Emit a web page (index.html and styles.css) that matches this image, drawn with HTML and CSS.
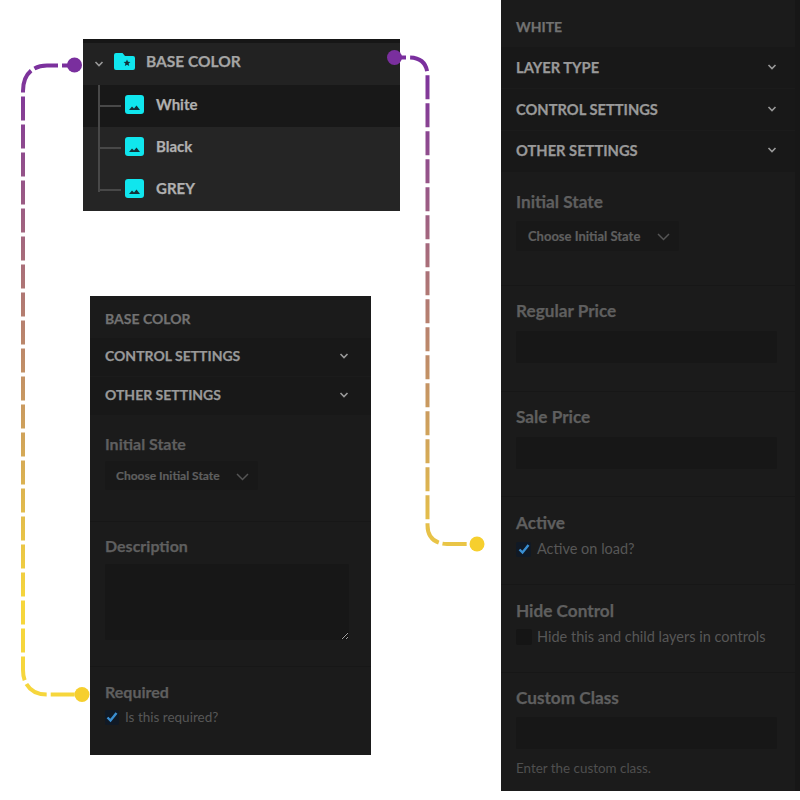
FILE: index.html
```html
<!DOCTYPE html>
<html lang="en">
<head>
<meta charset="utf-8">
<title>Layer settings</title>
<link rel="stylesheet" href="styles.css">
</head>
<body>
<div class="canvas">
  <section class="tree">
    <div class="tree-head">
      <svg class="caret-small" viewBox="0 0 10 6"><path d="M1.500 1l3.500 3.500L8.500 1"/></svg>
      <svg class="folder" viewBox="0 0 21 17"><path d="M2 0h6.500l2.500 3h8a2 2 0 0 1 2 2v10a2 2 0 0 1-2 2H2a2 2 0 0 1-2-2V2a2 2 0 0 1 2-2z" fill="#10e6ee"/><path d="M13 6.500l1 2.300 2.400.2-1.800 1.600.6 2.400-2.200-1.300-2.200 1.300.6-2.400-1.800-1.600 2.400-.2z" fill="#123038"/></svg>
      <span>BASE COLOR</span>
    </div>
    <div class="tree-body">
      <div class="tree-line"></div>
      <div class="tree-row selected">
        <i class="branch"></i>
        <svg class="pic" viewBox="0 0 19 19"><rect width="19" height="19" rx="3" fill="#10e6ee"/><path d="M4 15l3-3.500 2 2 2.500-3 3.500 4.500z" fill="#123038"/></svg>
        <span>White</span>
      </div>
      <div class="tree-row">
        <i class="branch"></i>
        <svg class="pic" viewBox="0 0 19 19"><rect width="19" height="19" rx="3" fill="#10e6ee"/><path d="M4 15l3-3.500 2 2 2.500-3 3.500 4.500z" fill="#123038"/></svg>
        <span>Black</span>
      </div>
      <div class="tree-row">
        <i class="branch"></i>
        <svg class="pic" viewBox="0 0 19 19"><rect width="19" height="19" rx="3" fill="#10e6ee"/><path d="M4 15l3-3.500 2 2 2.500-3 3.500 4.500z" fill="#123038"/></svg>
        <span>GREY</span>
      </div>
    </div>
  </section>

  <section class="panel panel-base">
    <div class="title">BASE COLOR</div>
    <div class="acc"><span>CONTROL SETTINGS</span><svg class="caret-small" viewBox="0 0 10 6"><path d="M1.500 1l3.500 3.500L8.500 1"/></svg></div>
    <div class="acc"><span>OTHER SETTINGS</span><svg class="caret-small" viewBox="0 0 10 6"><path d="M1.500 1l3.500 3.500L8.500 1"/></svg></div>
    <div class="group g-initial">
      <div class="label">Initial State</div>
      <div class="select"><span>Choose Initial State</span><svg viewBox="0 0 13 8"><path d="M1 1l5.500 5.500L12 1"/></svg></div>
    </div>
    <div class="group g-desc">
      <div class="label">Description</div>
      <textarea class="area"></textarea>
    </div>
    <div class="group g-req">
      <div class="label">Required</div>
      <div class="check"><span class="box"><svg viewBox="0 0 12 12"><path d="M1.500 6.500l3 3 6-7.500"/></svg></span><span>Is this required?</span></div>
    </div>
  </section>

  <section class="panel panel-white">
    <div class="title">WHITE</div>
    <div class="acc"><span>LAYER TYPE</span><svg class="caret-small" viewBox="0 0 10 6"><path d="M1.500 1l3.500 3.500L8.500 1"/></svg></div>
    <div class="acc"><span>CONTROL SETTINGS</span><svg class="caret-small" viewBox="0 0 10 6"><path d="M1.500 1l3.500 3.500L8.500 1"/></svg></div>
    <div class="acc acc-last"><span>OTHER SETTINGS</span><svg class="caret-small" viewBox="0 0 10 6"><path d="M1.500 1l3.500 3.500L8.500 1"/></svg></div>
    <div class="group w-initial">
      <div class="label">Initial State</div>
      <div class="select"><span>Choose Initial State</span><svg viewBox="0 0 13 8"><path d="M1 1l5.500 5.500L12 1"/></svg></div>
    </div>
    <div class="group w-field">
      <div class="label">Regular Price</div>
      <div class="input"></div>
    </div>
    <div class="group w-field w-sale">
      <div class="label">Sale Price</div>
      <div class="input"></div>
    </div>
    <div class="group w-check">
      <div class="label">Active</div>
      <div class="check"><span class="box"><svg viewBox="0 0 12 12"><path d="M1.500 6.500l3 3 6-7.500"/></svg></span><span>Active on load?</span></div>
    </div>
    <div class="group w-check">
      <div class="label">Hide Control</div>
      <div class="check"><span class="box empty"></span><span>Hide this and child layers in controls</span></div>
    </div>
    <div class="group w-last">
      <div class="label">Custom Class</div>
      <div class="input"></div>
      <div class="help">Enter the custom class.</div>
    </div>
  </section>

  <svg class="wires" width="800" height="800" viewBox="0 0 800 800">
    <defs>
      <linearGradient id="fade" gradientUnits="userSpaceOnUse" x1="0" y1="60" x2="0" y2="600">
        <stop offset="0" stop-color="#7a2f9e"/>
        <stop offset="1" stop-color="#f6d63c"/>
      </linearGradient>
    </defs>
    <path class="wire" d="M74 65.500H47C32 65.500 23 75 23 91V670C23 685 32 694.500 47 694.500H82"/>
    <path class="wire" d="M394 57.500H409C421 57.500 427.500 64 427.500 76V525C427.500 537 435 544 447 544H477"/>
    <circle cx="74.500" cy="65" r="7.500" fill="#7a2f9e"/>
    <circle cx="394.500" cy="57.500" r="7.500" fill="#7a2f9e"/>
    <circle cx="82" cy="694.500" r="7.500" fill="#f6cf2e"/>
    <circle cx="477" cy="544" r="7.500" fill="#f6cf2e"/>
  </svg>
</div>
</body>
</html>
```
FILE: styles.css
```css
* { box-sizing: border-box; }
html, body { margin: 0; background: #fff; }
body { font-family: Lato, "Noto Sans", sans-serif; }
.canvas { position: relative; width: 800px; height: 800px; overflow: hidden; }

.wires { position: absolute; left: 0; top: 0; pointer-events: none; }
.wire { fill: none; stroke: url(#fade); stroke-width: 4; stroke-dasharray: 24 4; stroke-dashoffset: 12; }

/* tree */
.tree { position: absolute; left: 83px; top: 39px; width: 317px; height: 172px; background: #252525; border-top: 4px solid #161616; }
.tree-head { height: 42px; display: flex; align-items: center; padding: 0 0 6px 11px; background: #222; color: #a5a5a5; font-weight: 700; font-size: 15.500px; -webkit-text-stroke: .25px currentColor; }
.tree-head span { margin-left: 11px; }
.tree-head .caret-small { margin-top: 5px; }
.caret-small { flex: none; width: 10px; height: 6px; fill: none; stroke: #999; stroke-width: 1.600; }
.folder { width: 21px; height: 17px; margin-left: 10px; }
.tree-body { position: relative; }
.tree-line { position: absolute; left: 15px; top: 0; width: 2px; height: 107px; background: #484848; }
.tree-row { height: 42px; display: flex; align-items: center; padding-bottom: 4px; color: #b0b0b0; font-weight: 700; font-size: 15px; -webkit-text-stroke: .25px currentColor; }
.tree-row.selected { background: #181818; }
.tree-row span { margin-left: 12px; }
.branch { display: block; width: 22px; height: 2px; margin: 4px 0 0 16px; background: #484848; }
.pic { width: 19px; height: 19px; margin-left: 4px; }

/* panels */
.panel { position: absolute; background: #1b1b1b; color: #5f5f5f; }
.panel-base { left: 90px; top: 296px; width: 281px; height: 459px; }
.panel-white { left: 501px; top: 0; width: 299px; height: 791px; border-right: 5px solid #171717; }
.title { display: flex; align-items: center; padding: 4px 0 0 15px; height: 41px; color: #727272; font-weight: 700; font-size: 14px; -webkit-text-stroke: .25px currentColor; }
.panel-white .title { height: 46px; padding-top: 6px; }
.acc { display: flex; align-items: center; justify-content: space-between; height: 39px; padding: 0 22px 3px 15px; background: #181818; border-top: 1px solid #1b1b1b; color: #999; font-weight: 700; font-size: 14px; -webkit-text-stroke: .25px currentColor; }
.panel-white .acc { height: 42px; padding: 0 18px 2px 15px; font-size: 14.700px; }
.panel-white .acc-last { padding-bottom: 4px; }
.group { padding: 0 15px; border-bottom: 1px solid #171717; }
.label { font-weight: 700; font-size: 16px; line-height: 20px; color: #5f5f5f; -webkit-text-stroke: .25px currentColor; }
.panel-white .label { font-size: 17.200px; }

.select { display: flex; align-items: center; justify-content: space-between; margin-top: 7px; background: #181818; border-radius: 2px; color: #5f5f5f; font-weight: 700; font-size: 12px; -webkit-text-stroke: .2px currentColor; }
.select svg { flex: none; width: 13px; height: 8px; margin-top: 2px; fill: none; stroke: #555; stroke-width: 1.500; }

.g-initial { height: 107px; padding-top: 19px; }
.g-initial .select { width: 153px; height: 29px; padding: 0 9px 0 11px; }
.g-desc { height: 145px; padding-top: 14px; }
.area { display: block; width: 244px; height: 76px; margin: 8px 0 0; background: #171717; border: 0; border-radius: 2px; outline: 0; }
.g-req { padding-top: 15px; border: 0; }
.g-req .check { margin-top: 7px; }
.g-req .box { width: 14px; }

.check { display: flex; align-items: center; gap: 6px; margin-top: 8px; font-size: 13.500px; line-height: 16px; color: #575757; }
.panel-white .check { font-size: 14.500px; }
.box { flex: none; display: flex; align-items: center; justify-content: center; width: 15px; height: 15px; background: #101925; border-radius: 2px; }
.box.empty { width: 16px; height: 16px; margin-right: -1px; background: #151515; }
.box svg { width: 12px; height: 12px; fill: none; stroke: #3a8fd2; stroke-width: 2.400; }

.w-initial { height: 114px; padding-top: 20px; }
.w-initial .select { width: 163px; height: 30px; margin-top: 9px; padding: 0 9px 0 12px; font-size: 13px; }
.w-field { height: 106px; padding-top: 15px; }
.w-sale { height: 105px; }
.w-field .input { margin-top: 10px; }
.w-check { height: 88px; padding-top: 16px; }
.w-last { padding-top: 15px; border: 0; }
.input { width: 261px; height: 32px; margin-top: 9px; background: #171717; border-radius: 2px; }
.help { margin-top: 11px; font-size: 13.400px; line-height: 16px; color: #4f4f4f; }
```
